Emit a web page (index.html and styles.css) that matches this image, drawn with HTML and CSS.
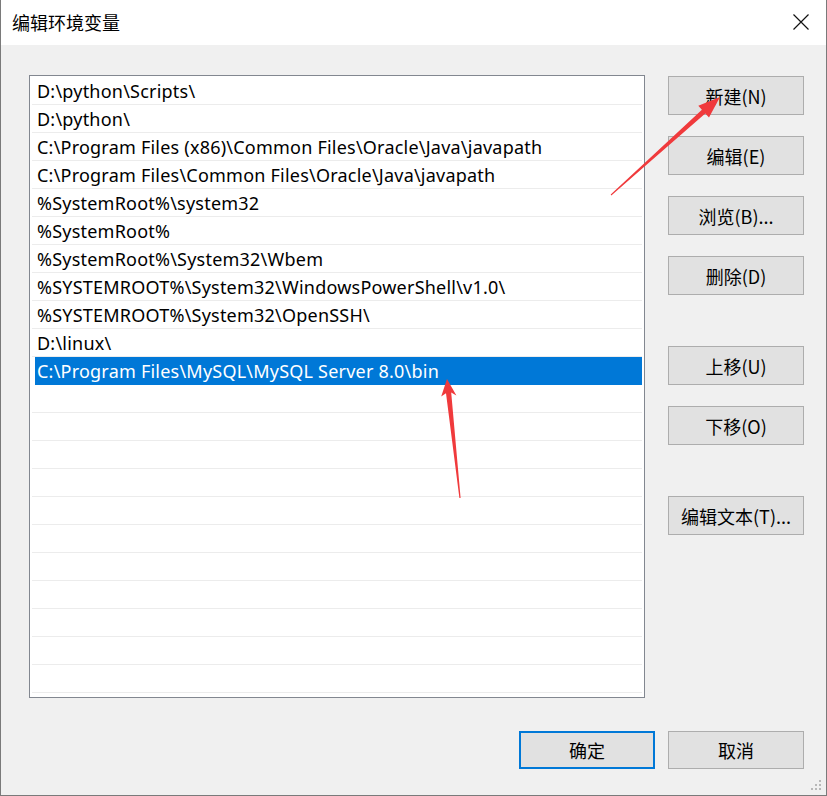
FILE: index.html
```html
<!DOCTYPE html>
<html lang="zh-CN">
<head>
<meta charset="utf-8">
<title>编辑环境变量</title>
<link rel="stylesheet" href="styles.css">
</head>
<body>
<div class="window">
  <div class="titlebar">
    <span class="title">编辑环境变量</span>
    <svg class="close" width="16" height="16" viewBox="0 0 16 16"><path d="M0.5 0.5 L15.5 15.5 M15.5 0.5 L0.5 15.5" stroke="#111" stroke-width="1.2" fill="none"/></svg>
  </div>
  <div class="content">
    <div class="main">
      <div class="list">
        <div class="row">D:\python\Scripts\</div>
        <div class="row">D:\python\</div>
        <div class="row">C:\Program Files (x86)\Common Files\Oracle\Java\javapath</div>
        <div class="row">C:\Program Files\Common Files\Oracle\Java\javapath</div>
        <div class="row">%SystemRoot%\system32</div>
        <div class="row">%SystemRoot%</div>
        <div class="row">%SystemRoot%\System32\Wbem</div>
        <div class="row">%SYSTEMROOT%\System32\WindowsPowerShell\v1.0\</div>
        <div class="row">%SYSTEMROOT%\System32\OpenSSH\</div>
        <div class="row">D:\linux\</div>
        <div class="row selected">C:\Program Files\MySQL\MySQL Server 8.0\bin</div>
        <div class="row"></div><div class="row"></div><div class="row"></div>
        <div class="row"></div><div class="row"></div><div class="row"></div>
        <div class="row"></div><div class="row"></div><div class="row"></div>
        <div class="row"></div><div class="row"></div>
      </div>
      <div class="side">
        <div class="group">
          <button class="btn">新建(N)</button>
          <button class="btn">编辑(E)</button>
          <button class="btn">浏览(B)...</button>
          <button class="btn">删除(D)</button>
        </div>
        <div class="group">
          <button class="btn">上移(U)</button>
          <button class="btn">下移(O)</button>
        </div>
        <div class="group">
          <button class="btn">编辑文本(T)...</button>
        </div>
      </div>
    </div>
    <div class="footer">
      <button class="btn default">确定</button>
      <button class="btn">取消</button>
    </div>
  </div>
  <svg class="grip" width="12" height="12" viewBox="0 0 12 12">
    <rect x="8" y="0" width="2" height="2" fill="#b8b8b8"/>
    <rect x="4" y="4" width="2" height="2" fill="#b8b8b8"/>
    <rect x="8" y="4" width="2" height="2" fill="#b8b8b8"/>
    <rect x="0" y="8" width="2" height="2" fill="#b8b8b8"/>
    <rect x="4" y="8" width="2" height="2" fill="#b8b8b8"/>
    <rect x="8" y="8" width="2" height="2" fill="#b8b8b8"/>
  </svg>
  <svg class="arrows" width="827" height="796" viewBox="0 0 827 796">
    <polygon fill="#f03a3c" points="720,97 709,117.6 705.3,113.6 611.3,195.4 610.7,194.6 701.9,109.8 698.3,105.8"/>
    <polygon fill="#f03a3c" points="447,379 456.4,395.4 451.2,392.4 460.6,497.9 459.4,498.1 446,393.2 441.2,396.4"/>
  </svg>
</div>
</body>
</html>
```
FILE: styles.css
```css
* { box-sizing: border-box; }
html, body { margin: 0; padding: 0; background: #f0f0f0; }
body {
  font-family: "Noto Sans", "Noto Sans CJK SC", sans-serif;
  font-size: 18px;
  color: #000;
}
.window {
  position: relative;
  width: 827px;
  height: 796px;
  background: #f0f0f0;
  border-left: 1px solid #7a7a7a;
  border-right: 1px solid #7a7a7a;
  border-bottom: 1px solid #7a7a7a;
  display: flex;
  flex-direction: column;
  overflow: hidden;
}
.titlebar {
  height: 45px;
  background: #fff;
  display: flex;
  align-items: center;
  justify-content: space-between;
  padding: 0 17px 2px 11px;
  flex: none;
}
.title {
  font-family: "Noto Sans CJK SC", sans-serif;
  font-size: 18px;
  color: #000;
}
.content {
  flex: 1;
  padding: 30px 22px 0 28px;
  display: flex;
  flex-direction: column;
}
.main {
  display: flex;
  gap: 23px;
}
.list {
  width: 616px;
  height: 623px;
  background: #fff;
  border: 1px solid #828790;
  padding: 1px 1px 0 2px;
  overflow: hidden;
  flex: none;
}
.row {
  height: 28px;
  line-height: 28px;
  border-bottom: 1px solid #ececec;
  padding-left: 5px;
  white-space: nowrap;
  margin-right: 1px;
  letter-spacing: 0.22px;
}
.row.selected {
  background: #0078d7;
  color: #fff;
  border-bottom-color: #0078d7;
  margin-left: 3px;
  padding-left: 2px;
}
.side {
  width: 136px;
  display: flex;
  flex-direction: column;
  gap: 51px;
  padding-top: 1px;
}
.group {
  display: flex;
  flex-direction: column;
  gap: 21px;
}
.btn {
  width: 136px;
  height: 39px;
  background: #e1e1e1;
  border: 1px solid #adadad;
  border-radius: 0;
  font-family: "Noto Sans CJK SC", sans-serif;
  font-size: 18px;
  color: #000;
  padding: 0;
  margin: 0;
}
.footer {
  display: flex;
  justify-content: flex-end;
  gap: 13px;
  margin-top: 33px;
}
.footer .btn { height: 38px; }
.footer .default {
  width: 136px;
  border: 2px solid #0078d7;
}
.grip {
  position: absolute;
  right: 3px;
  bottom: 3px;
}
.arrows {
  position: absolute;
  left: -1px;
  top: 0;
  pointer-events: none;
}
```
